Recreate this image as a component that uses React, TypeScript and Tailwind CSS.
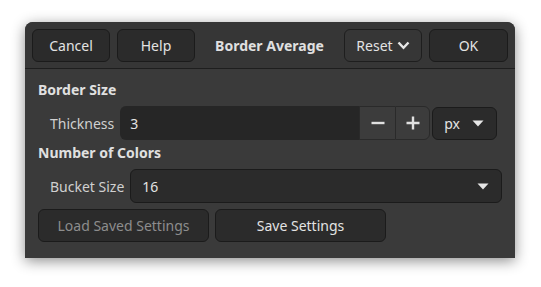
import React from "react";

const font = { fontFamily: '"Noto Sans", "DejaVu Sans", sans-serif' };

function Tri() {
  return (
    <svg width="12" height="7" viewBox="0 0 12 7" className="block">
      <path d="M0.5 0.5 H11.5 L6 6.5 Z" fill="#e6e6e6" />
    </svg>
  );
}

export default function App() {
  return (
    <div className="w-[541px] h-[287px] bg-white pl-[25px] pt-[22px]" style={font}>
      <div className="w-[490px] h-[236px] bg-[#3a3a3a] rounded-t-[8px] shadow-[0_3px_14px_rgba(0,0,0,0.45)] flex flex-col text-[14px] text-[#e3e3e3]">
        {/* Header */}
        <div className="h-[47px] flex items-center px-[7px] bg-[#363636] rounded-t-[8px] border-b border-[#1e1e1e]">
          <button className="w-[78px] h-[33px] rounded-[6px] bg-[#2b2b2b] border border-[#1b1b1b] text-[#e3e3e3]">Cancel</button>
          <button className="ml-[7px] w-[78px] h-[33px] rounded-[6px] bg-[#2b2b2b] border border-[#1b1b1b] text-[#e3e3e3]">Help</button>
          <div className="flex-1 text-center font-bold text-[#e0e0e0]">Border Average</div>
          <button className="w-[78px] h-[33px] rounded-[6px] bg-[#363636] border border-[#1e1e1e] text-[#e3e3e3] flex items-center justify-center gap-[4px]">
            <span>Reset</span>
            <svg width="13" height="9" viewBox="0 0 13 9" className="block mt-[1px]">
              <path d="M1.5 1.5 L6.5 6.8 L11.5 1.5" fill="none" stroke="#e6e6e6" strokeWidth="2.4" />
            </svg>
          </button>
          <button className="ml-[7px] w-[79px] h-[33px] rounded-[6px] bg-[#2b2b2b] border border-[#1b1b1b] text-[#e3e3e3]">OK</button>
        </div>

        {/* Body */}
        <div className="flex flex-col pl-[13px] pt-[11px]">
          <div className="h-[20px] leading-[20px] font-bold text-[#e0e0e0]">Border Size</div>
          <div className="mt-[6px] flex items-center pl-[12px] h-[34px]">
            <span className="text-[#d0d0d0]">Thickness</span>
            <div className="ml-[6px] flex h-[34px]">
              <div className="w-[239px] h-full bg-[#262626] rounded-l-[6px] flex items-center pl-[10px] text-[#e3e3e3]">3</div>
              <div className="w-[36px] h-full bg-[#3c3c3c] border-y border-l border-[#2a2a2a] flex items-center justify-center">
                <svg width="14" height="14" viewBox="0 0 14 14" className="block">
                  <path d="M0.5 7 H13.5" stroke="#e0e0e0" strokeWidth="2.4" />
                </svg>
              </div>
              <div className="w-[35px] h-full bg-[#3c3c3c] border border-[#2a2a2a] rounded-r-[6px] flex items-center justify-center">
                <svg width="14" height="14" viewBox="0 0 14 14" className="block">
                  <path d="M0.5 7 H13.5 M7 0.5 V13.5" stroke="#e0e0e0" strokeWidth="2.4" />
                </svg>
              </div>
            </div>
            <div className="ml-[2px] w-[65px] h-[33px] rounded-[6px] bg-[#2b2b2b] border border-[#1b1b1b] flex items-center pl-[11px] pr-[12px] justify-between">
              <span className="text-[#e3e3e3]">px</span>
              <Tri />
            </div>
          </div>
          <div className="mt-[3px] h-[20px] leading-[20px] font-bold text-[#e0e0e0]">Number of Colors</div>
          <div className="mt-[6px] flex items-center pl-[12px] h-[34px]">
            <span className="text-[#d0d0d0]">Bucket Size</span>
            <div className="ml-[6px] w-[372px] h-[34px] rounded-[6px] bg-[#2b2b2b] border border-[#1b1b1b] flex items-center justify-between pl-[11px] pr-[12px]">
              <span className="text-[#e3e3e3]">16</span>
              <Tri />
            </div>
          </div>
          <div className="mt-[6px] flex items-center gap-[6px]">
            <button className="w-[171px] h-[33px] rounded-[6px] bg-[#2b2b2b] border border-[#1b1b1b] text-[#8d8d8d]">Load Saved Settings</button>
            <button className="w-[171px] h-[33px] rounded-[6px] bg-[#2b2b2b] border border-[#1b1b1b] text-[#e3e3e3]">Save Settings</button>
          </div>
        </div>
      </div>
    </div>
  );
}
